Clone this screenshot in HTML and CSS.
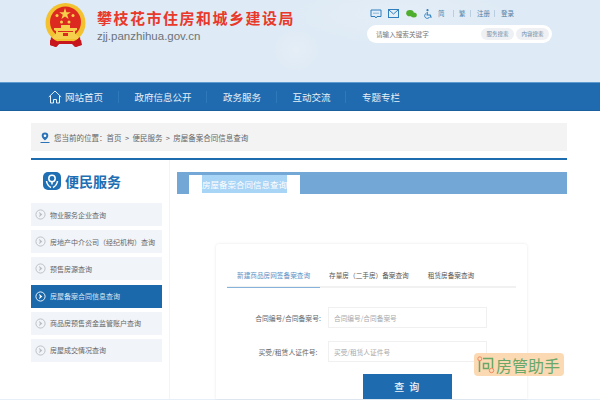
FILE: index.html
```html
<!DOCTYPE html>
<html lang="zh">
<head>
<meta charset="utf-8">
<title>攀枝花市住房和城乡建设局</title>
<link rel="stylesheet" href="styles.css">
</head>
<body>
<svg class="defs" width="0" height="0">
  <symbol id="arrow" viewBox="0 0 12 12">
    <circle cx="6" cy="6" r="5" fill="none" stroke="currentColor" stroke-width="1"/>
    <path d="M4.3 3l3.7 3-3.7 3 1-3z" fill="currentColor"/>
  </symbol>
</svg>
<header class="top">
  <div class="brand">
    <svg class="emblem" viewBox="0 0 41 44">
      <path d="M6 34h29l1 8-6 2-3-3H14l-3 3-6-2z" fill="#c8161d"/>
      <circle cx="20.5" cy="20" r="20" fill="#f2c230"/>
      <circle cx="20.5" cy="19" r="15.5" fill="#dd2a20"/>
      <path d="M20 5l1.4 4.2h4.4l-3.6 2.6 1.4 4.200-3.600-2.600-3.600 2.600 1.400-4.200-3.600-2.600h4.400z" fill="#f6d04a"/>
      <circle cx="12" cy="12.500" r="1.500" fill="#f6d04a"/><circle cx="28" cy="12.500" r="1.500" fill="#f6d04a"/>
      <circle cx="16.500" cy="19" r="1.500" fill="#f6d04a"/><circle cx="24" cy="19" r="1.500" fill="#f6d04a"/>
      <path d="M9 25h23v2l-2 1v3l3 2v3H8v-3l3-2v-3l-2-1zM16 22h9v3h-9z" fill="#f6cf4d"/>
      <path d="M13 28h15v1H13zM18 30h5v3h-5z" fill="#dd2a20"/>
      <path d="M5 37l6 2 3-1h13l3 1 6-2 1 5-6 2-3-3H14l-3 3-6-2z" fill="#c8161d"/>
    </svg>
    <div class="brand-text">
      <div class="site-title">攀枝花市住房和城乡建设局</div>
      <div class="site-url">zjj.panzhihua.gov.cn</div>
    </div>
  </div>
  <div class="tools">
    <div class="toolbar">
      <svg class="tool-icon msg" viewBox="0 0 12 10"><path d="M1 1h10v6.500H7L6 9 5 7.500H1z" fill="none" stroke="#2f7fbf" stroke-width="1"/><path d="M3.500 4.200h1M5.500 4.200h1M7.500 4.200h1" stroke="#2f7fbf"/></svg>
      <svg class="tool-icon mail" viewBox="0 0 11 9"><rect x=".5" y=".5" width="10" height="8" fill="none" stroke="#2f7fbf"/><path d="M1 1l4.500 4L10 1" fill="none" stroke="#2f7fbf"/></svg>
      <svg class="tool-icon wechat" viewBox="0 0 11 8"><ellipse cx="4" cy="3.200" rx="3.800" ry="3.100" fill="#4fae2e"/><ellipse cx="7.800" cy="5" rx="3" ry="2.500" fill="#4fae2e"/></svg>
      <svg class="tool-icon access" viewBox="0 0 8 10"><circle cx="3.500" cy="1.200" r="1.100" fill="#2f7fbf"/><path d="M3.200 3v3h3l1 2.800" fill="none" stroke="#2f7fbf" stroke-width="1.200"/><path d="M2 4.500a2.600 2.600 0 1 0 3.600 3.400" fill="none" stroke="#2f7fbf"/></svg>
      <a class="tool-link lang">简</a><i class="tool-sep tool-sep-wide"></i>
      <a class="tool-link lang">繁</a><i class="tool-sep"></i>
      <a class="tool-link">注册</a><i class="tool-sep"></i>
      <a class="tool-link">登录</a>
    </div>
    <div class="search">
      <input class="search-input" placeholder="请输入搜索关键字">
      <span class="search-btn">服务搜索</span>
      <span class="search-btn">内容搜索</span>
    </div>
  </div>
</header>
<nav class="nav">
  <a class="nav-item nav-home">
    <svg class="home" viewBox="0 0 14 14"><path d="M.8 7L7 1l6.200 6M2.500 6v7h3V9.500h3V13h3V6" fill="none" stroke="#e6f0f8" stroke-width="1"/></svg>网站首页
  </a>
  <a class="nav-item">政府信息公开</a>
  <a class="nav-item">政务服务</a>
  <a class="nav-item">互动交流</a>
  <a class="nav-item nav-last">专题专栏</a>
</nav>
<main class="wrap">
  <div class="crumb">
    <svg class="pin" viewBox="0 0 10 11"><path d="M5 .5a3.300 3.300 0 0 1 3.300 3.300C8.300 6 5 8.500 5 8.500S1.700 6 1.700 3.800A3.300 3.300 0 0 1 5 .5z" fill="#2a73b8"/><circle cx="5" cy="3.800" r="1.300" fill="#fff"/><path d="M.5 10.500h9" stroke="#2a73b8"/></svg>
    <span>您当前的位置：首页 &gt; 便民服务 &gt; 房屋备案合同信息查询</span>
  </div>
  <div class="columns">
    <aside class="side">
      <div class="side-title">
        <svg class="side-logo" viewBox="0 0 18 18"><rect width="18" height="18" rx="5" fill="#1e6fb3"/><circle cx="9" cy="6.500" r="3.200" fill="none" stroke="#fff" stroke-width="1.500"/><path d="M3.500 9c.5 3.500 2.500 5.500 4.500 6.500M14.500 9c-.5 3.500-2.500 5.500-4.500 6.500M9 9.500v3" fill="none" stroke="#fff" stroke-width="1.500"/></svg>
        <span>便民服务</span>
      </div>
      <ul class="side-list">
        <li class="side-item"><svg class="arrow"><use href="#arrow"/></svg>物业服务企业查询</li>
        <li class="side-item"><svg class="arrow"><use href="#arrow"/></svg>房地产中介公司（经纪机构）查询</li>
        <li class="side-item"><svg class="arrow"><use href="#arrow"/></svg>预售房源查询</li>
        <li class="side-item is-active"><svg class="arrow"><use href="#arrow"/></svg>房屋备案合同信息查询</li>
        <li class="side-item"><svg class="arrow"><use href="#arrow"/></svg>商品房预售资金监管账户查询</li>
        <li class="side-item"><svg class="arrow"><use href="#arrow"/></svg>房屋成交情况查询</li>
      </ul>
    </aside>
    <section class="content">
      <div class="content-bar"><div class="content-tab"><span class="selected">房屋备案合同信息查询</span></div></div>
      <div class="card">
        <div class="tabs">
          <a class="tab is-active">新建商品房网签备案查询</a>
          <a class="tab">存量房（二手房）备案查询</a>
          <a class="tab">租赁房备案查询</a>
        </div>
        <div class="row">
          <label class="row-label">合同编号/合同备案号:</label>
          <input class="row-input" placeholder="合同编号/合同备案号">
        </div>
        <div class="row">
          <label class="row-label">买受/租赁人证件号:</label>
          <input class="row-input" placeholder="买受/租赁人证件号">
        </div>
        <div class="actions"><button class="submit">查 询</button></div>
      </div>
    </section>
  </div>
</main>
<div class="band"></div>
<div class="watermark">
  <svg class="wm-logo" viewBox="0 0 18 18"><path d="M2.500 3v13M6 2.500h9.500V15M6.500 7.500h5v5h-5z" fill="none" stroke="#6aa86a" stroke-width="1.500"/><circle cx="2.800" cy="2.800" r="2" fill="#fbd9b3" stroke="#ee8a5f"/><circle cx="14.500" cy="14.500" r="2.200" fill="#fbd9b3" stroke="#ee8a5f"/></svg>
  <span>房管助手</span>
</div>
</body>
</html>
```
FILE: styles.css
```css
* { box-sizing: border-box; }
html, body { margin: 0; padding: 0; }
body {
  position: relative;
  width: 600px;
  height: 400px;
  overflow: hidden;
  background: #fff;
  font-family: "Noto Sans CJK SC", "Liberation Sans", sans-serif;
  color: #555;
}
.defs { position: absolute; }
a { color: inherit; text-decoration: none; }

.top {
  display: flex;
  justify-content: space-between;
  height: 82px;
  padding: 3px 48px 0 45px;
  background:
    radial-gradient(ellipse 24px 22px at 296px 50px, #e5eef7 0, rgba(229,238,247,0) 100%),
    radial-gradient(ellipse 110px 30px at 400px 15px, #e4eef7 0, rgba(228,238,247,0) 100%),
    #deeaf5;
}
.brand { display: flex; align-items: flex-start; }
.emblem { width: 41px; height: 44px; flex: none; }
.brand-text { margin: 5px 0 0 11px; }
.site-title {
  font-size: 15px;
  line-height: 20px;
  font-weight: 700;
  letter-spacing: 1.5px;
  color: #e8392a;
}
.site-url {
  margin-top: 1px;
  font-family: "Liberation Sans", sans-serif;
  font-size: 11.5px;
  line-height: 14px;
  color: #6d7379;
}
.tools { width: 185px; padding-top: 5px; }
.toolbar {
  display: flex;
  align-items: center;
  height: 11px;
  padding-left: 3px;
  font-size: 6.500px;
  color: #4f7fa6;
}
.tool-icon { flex: none; }
.msg { width: 12px; height: 10px; margin-right: 6px; }
.mail { width: 11px; height: 9px; margin-right: 7px; }
.wechat { width: 11px; height: 8px; margin-right: 7px; }
.access { width: 8px; height: 10px; margin-right: 6px; }
.tool-link { line-height: 11px; }
.lang { width: 7px; }
.tool-sep { width: 1px; height: 7px; margin: 0 6px 0 4px; background: #b9cfe1; }
.tool-sep-wide { margin-left: 8px; margin-right: 5px; }
.search {
  display: flex;
  align-items: center;
  height: 18px;
  margin-top: 6px;
  padding: 0 3px 0 9px;
  border-radius: 9px;
  background: #fff;
}
.search-input {
  flex: 1;
  min-width: 0;
  padding: 0;
  border: 0;
  outline: 0;
  font: 6.600px "Noto Sans CJK SC", sans-serif;
}
.search-input::placeholder { color: #777; opacity: 1; }
.search-btn {
  width: 33px;
  height: 12px;
  margin-left: 2px;
  border-radius: 6px;
  background: #eef0f3;
  font-size: 5.500px;
  line-height: 12px;
  text-align: center;
  color: #6f8ca6;
}

.nav {
  display: flex;
  align-items: center;
  height: 29px;
  padding-left: 48px;
  border-top: 1px solid #5d9bd1;
  border-bottom: 1px solid #1b5f9e;
  background: #206bb0;
  color: #e8f0f7;
  font-size: 9.500px;
}
.nav-item {
  display: flex;
  align-items: center;
  height: 12px;
  padding: 0 14.500px 0 16px;
  border-right: 1px solid #2f78b9;
}
.nav-home { padding-left: 0; }
.nav-last { border-right: 0; }
.home { width: 14px; height: 14px; margin-right: 3px; }

.wrap { height: 288px; padding: 12px 33px 0 31px; }
.crumb {
  display: flex;
  align-items: center;
  height: 28px;
  padding-left: 9px;
  background: #f3f3f3;
  font-size: 7.500px;
  word-spacing: 1.700px;
  color: #666;
}
.pin { width: 10px; height: 11px; margin-right: 4px; }
.columns {
  display: flex;
  margin-top: 7px;
  border-top: 2px solid #1e6cb0;
}
.side { width: 139px; flex: none; padding: 12px 7px 0 0; border-right: 1px solid #f2f4f7; height: 239px; }
.side-title {
  display: flex;
  align-items: center;
  height: 18px;
  padding-left: 12px;
  font-size: 14px;
  font-weight: 700;
  color: #1e6fb3;
}
.side-logo { width: 18px; height: 18px; margin-right: 4px; }
.side-list { margin: 13px 0 0; padding: 0; list-style: none; }
.side-item {
  display: flex;
  align-items: center;
  height: 23px;
  margin-bottom: 4.200px;
  padding-left: 4px;
  background: #f1f4f9;
  font-size: 7px;
  color: #666;
}
.arrow { width: 11px; height: 11px; margin-right: 4px; color: #b9bec3; }
.is-active.side-item { background: #1b68ab; color: #d5e7f5; }
.is-active.side-item .arrow { color: #fff; }

.content { flex: 1; min-width: 0; padding: 12px 0 0 7px; }
.content-bar { height: 22px; padding: 3px 0 0 12px; background: #72a7d6; }
.content-tab { width: 111px; height: 19px; padding-left: 13px; background: #fff; }
.selected {
  display: block;
  width: 85px;
  height: 18px;
  background: #a8d4f6;
  font-size: 8.500px;
  line-height: 18px;
  color: #fff;
}
.card {
  width: 311px;
  height: 155px;
  margin: 50px 0 0 39px;
  padding: 20px 11px 0;
  border-radius: 3px 3px 0 0;
  box-shadow: 0 0 3px rgba(0, 0, 0, .1);
  background: #fff;
}
.tabs { display: flex; height: 24px; border-bottom: 2px solid #f1f1f1; }
.tab {
  height: 24px;
  padding: 0 10px;
  font-size: 6.650px;
  line-height: 22px;
  color: #555;
}
.tab.is-active { border-bottom: 1px solid #86b3da; color: #5a93c6; }
.tab + .tab { margin-left: -1px; }
.row { display: flex; align-items: center; height: 21px; margin-top: 13px; }
.tabs + .row { margin-top: 19px; }
.row-label {
  width: 94px;
  padding-left: 28px;
  font-size: 6.800px;
  white-space: nowrap;
  text-align: center;
  color: #666;
}
.row-input {
  width: 159px;
  height: 21px;
  margin-left: 7px;
  padding: 0 5px;
  border: 1px solid #f0f0f0;
  outline: 0;
  font: 6.700px "Noto Sans CJK SC", sans-serif;
}
.row-input::placeholder { color: #aaa; opacity: 1; }
.actions { margin: 12px 0 0 136px; }
.submit {
  display: block;
  width: 89px;
  height: 25px;
  padding: 0;
  border: 0;
  background: #1f6bb0;
  font: 500 10px "Noto Sans CJK SC", sans-serif;
  letter-spacing: 1.500px;
  color: #eef5fb;
}

.band { height: 1px; background: #e6eef7; }

.watermark {
  position: absolute;
  left: 474px;
  top: 353px;
  display: flex;
  align-items: center;
  width: 90px;
  height: 23px;
  padding-left: 3px;
  border-radius: 4px;
  background: #fbd9b3;
  font-size: 16px;
  color: #6aa86a;
}
.wm-logo { width: 18px; height: 18px; margin-right: 1px; flex: none; }
```
